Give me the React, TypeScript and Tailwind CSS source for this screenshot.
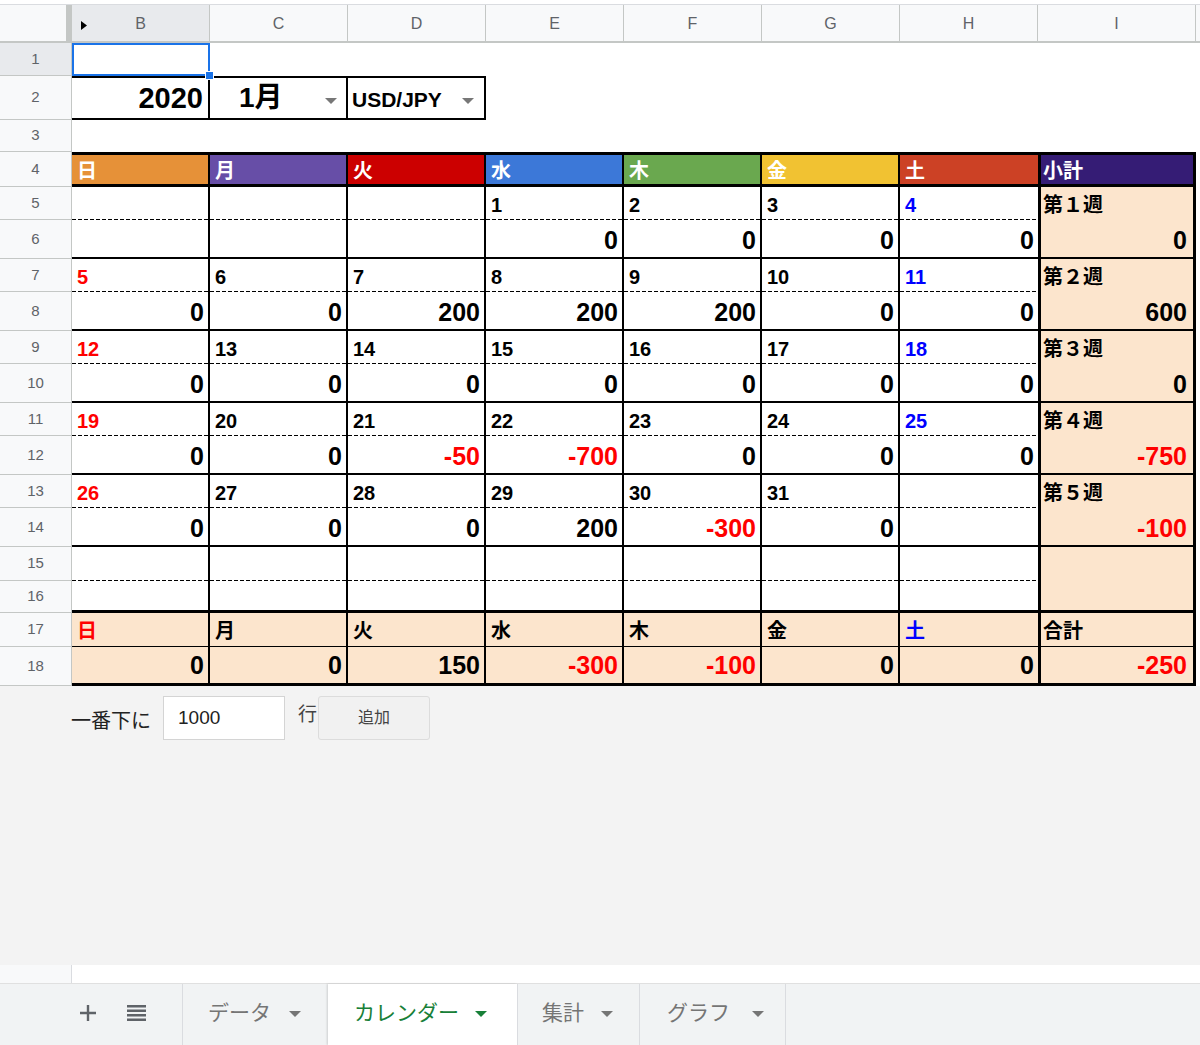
import React from 'react';

type Day = { d: number; v: number | null } | null;

interface Week {
  rows: [number, number];
  days: Day[];
  label: string;
  total: number | null;
}

const mk = (start: number, vals: number[]): Day[] =>
  vals.map((v, i) => ({ d: start + i, v }));

const weeks: Week[] = [
  {
    rows: [5, 6],
    days: [null, null, null, { d: 1, v: 0 }, { d: 2, v: 0 }, { d: 3, v: 0 }, { d: 4, v: 0 }],
    label: '第１週',
    total: 0,
  },
  { rows: [7, 8], days: mk(5, [0, 0, 200, 200, 200, 0, 0]), label: '第２週', total: 600 },
  { rows: [9, 10], days: mk(12, [0, 0, 0, 0, 0, 0, 0]), label: '第３週', total: 0 },
  { rows: [11, 12], days: mk(19, [0, 0, -50, -700, 0, 0, 0]), label: '第４週', total: -750 },
  {
    rows: [13, 14],
    days: [...mk(26, [0, 0, 0, 200, -300, 0]), null],
    label: '第５週',
    total: -100,
  },
];

const headers = [
  { t: '日', bg: 'bg-[#e69138]' },
  { t: '月', bg: 'bg-[#674ea7]' },
  { t: '火', bg: 'bg-[#cc0000]' },
  { t: '水', bg: 'bg-[#3c78d8]' },
  { t: '木', bg: 'bg-[#6aa84f]' },
  { t: '金', bg: 'bg-[#f1c232]' },
  { t: '土', bg: 'bg-[#cc4125]' },
];

const dayTotals = [0, 0, 150, -300, -100, 0, 0];

const dayColor = (i: number) =>
  i === 0 ? 'text-[#ff0000]' : i === 6 ? 'text-[#0000ff]' : 'text-black';
const valColor = (v: number | null) => (v !== null && v < 0 ? 'text-[#ff0000]' : 'text-black');

const Caret = ({ className }: { className?: string }) => (
  <svg width="12" height="6" viewBox="0 0 12 6" className={className}>
    <path d="M0 0h12L6 6z" fill="currentColor" />
  </svg>
);

// dotted divider between the date row and the value row
const Dashed = () => (
  <div className="h-[1px] shrink-0 bg-[repeating-linear-gradient(to_right,#000_0_4px,transparent_4px_6px)]" />
);

const RowHead = ({ n, cls, sel }: { n: number; cls: string; sel?: boolean }) => (
  <div
    className={`w-[72px] shrink-0 ${cls} ${
      sel ? 'bg-[#e8eaed]' : 'bg-[#f8f9fa]'
    } border-r border-b border-[#c4c7c5] flex items-center justify-center text-[15px] text-[#5f6368]`}
  >
    {n}
  </div>
);

const WeekBlock = ({ week }: { week: Week }) => (
  <div className="flex h-[72px]">
    <div className="flex flex-col w-[72px] shrink-0">
      <RowHead n={week.rows[0]} cls="h-[33px]" />
      <RowHead n={week.rows[1]} cls="flex-1" />
    </div>
    {week.days.map((d, i) => (
      <div
        key={i}
        className={`w-[138px] shrink-0 flex flex-col bg-white border-b-2 border-black ${
          i < 6 ? 'border-r-2' : ''
        }`}
      >
        <div
          className={`h-[32px] flex items-center pl-[5px] pt-[3px] text-[20px] font-bold ${dayColor(i)}`}
        >
          {d?.d}
        </div>
        <Dashed />
        <div
          className={`flex-1 flex items-center justify-end pr-[4px] pt-[2px] text-[25px] font-bold ${valColor(
            d ? d.v : null
          )}`}
        >
          {d?.v}
        </div>
      </div>
    ))}
    <div className="w-[158px] shrink-0 bg-[#fce5cd] border-l-[3px] border-r-[3px] border-b-2 border-black flex flex-col">
      <div className="h-[33px] flex items-center pl-[2px] pt-[3px] text-[20px] font-bold">{week.label}</div>
      <div
        className={`flex-1 flex items-center justify-end pr-[6px] pt-[2px] text-[25px] font-bold ${valColor(
          week.total
        )}`}
      >
        {week.total}
      </div>
    </div>
    <div className="flex-1 bg-white" />
  </div>
);

export default function App() {
  const cols = ['B', 'C', 'D', 'E', 'F', 'G', 'H'];
  return (
    <div className="w-[1200px] h-[1045px] flex flex-col overflow-hidden bg-[#f3f3f3] font-['Liberation_Sans','Noto_Sans_CJK_JP',sans-serif] text-black">
      {/* column headers */}
      <div className="h-[4px] bg-white shrink-0" />
      <div className="flex h-[39px] shrink-0 border-t border-[#dadce0] bg-[#f8f9fa]">
        <div className="w-[72px] shrink-0 border-r-[6px] border-b-[2px] border-[#c4c7c5] bg-[#f8f9fa]" />
        {cols.map((c, i) => (
          <div
            key={c}
            className={`relative w-[138px] shrink-0 border-r border-b-2 border-[#c4c7c5] flex items-center justify-center pt-[2px] text-[16px] text-[#5f6368] ${
              i === 0 ? 'bg-[#e8eaed]' : ''
            }`}
          >
            {i === 0 && (
              <svg width="6" height="9" viewBox="0 0 6 9" className="absolute left-[9px] top-[16px]">
                <path d="M0 0l6 4.5L0 9z" fill="#000" />
              </svg>
            )}
            {c}
          </div>
        ))}
        <div className="w-[158px] shrink-0 border-r border-b-2 border-[#c4c7c5] flex items-center justify-center pt-[2px] text-[16px] text-[#5f6368]">
          I
        </div>
        <div className="flex-1 border-b-2 border-[#c4c7c5]" />
      </div>

      {/* row 1 */}
      <div className="flex h-[33px] shrink-0 bg-white">
        <RowHead n={1} cls="h-full" sel />
        <div className="relative w-[138px] shrink-0 border-2 border-[#1a73e8]">
          <div className="absolute -right-[6px] -bottom-[6px] w-[9px] h-[9px] bg-[#1a73e8] border border-white" />
        </div>
        <div className="flex-1" />
      </div>

      {/* row 2 */}
      <div className="flex h-[44px] shrink-0 bg-white">
        <RowHead n={2} cls="h-full" />
        <div className="w-[138px] shrink-0 border-y-2 border-r-2 border-black flex items-center justify-end pr-[5px] pt-[1px] text-[29px] font-bold">
          2020
        </div>
        <div className="w-[138px] shrink-0 border-y-2 border-r-2 border-black flex items-center pl-[29px] text-[28px] font-bold">
          <span>1月</span>
          <Caret className="ml-auto mr-[9px] mt-[5px] text-[#777]" />
        </div>
        <div className="w-[138px] shrink-0 border-y-2 border-r-2 border-black flex items-center pl-[4px] text-[21px] font-bold">
          <span className="pt-[4px]">USD/JPY</span>
          <Caret className="ml-auto mr-[10px] mt-[5px] text-[#777]" />
        </div>
        <div className="flex-1" />
      </div>

      {/* row 3 */}
      <div className="flex h-[32px] shrink-0 bg-white">
        <RowHead n={3} cls="h-full" />
        <div className="flex-1" />
      </div>

      {/* row 4: weekday headers */}
      <div className="flex h-[35px] shrink-0 bg-white">
        <RowHead n={4} cls="h-full" />
        {headers.map((h, i) => (
          <div
            key={h.t}
            className={`w-[138px] shrink-0 ${h.bg} border-y-[3px] border-black ${
              i < 6 ? 'border-r-2' : ''
            } flex items-center pl-[5px] pt-[2px] text-[20px] font-bold text-white`}
          >
            {h.t}
          </div>
        ))}
        <div className="w-[158px] shrink-0 bg-[#351c75] border-[3px] border-black flex items-center pl-[2px] pt-[2px] text-[20px] font-bold text-white">
          小計
        </div>
        <div className="flex-1" />
      </div>

      {weeks.map((w) => (
        <WeekBlock key={w.label} week={w} />
      ))}

      {/* rows 15-16: empty week */}
      <div className="flex h-[66px] shrink-0">
        <div className="flex flex-col w-[72px] shrink-0">
          <RowHead n={15} cls="h-[34px]" />
          <RowHead n={16} cls="flex-1" />
        </div>
        {headers.map((h, i) => (
          <div
            key={h.t}
            className={`w-[138px] shrink-0 flex flex-col bg-white border-b-[3px] border-black ${
              i < 6 ? 'border-r-2' : ''
            }`}
          >
            <div className="h-[33px]" />
            <Dashed />
          </div>
        ))}
        <div className="w-[158px] shrink-0 bg-[#fce5cd] border-l-[3px] border-r-[3px] border-b-[3px] border-black" />
        <div className="flex-1 bg-white" />
      </div>

      {/* row 17 */}
      <div className="flex h-[34px] shrink-0">
        <RowHead n={17} cls="h-full" />
        {headers.map((h, i) => (
          <div
            key={h.t}
            className={`w-[138px] shrink-0 bg-[#fce5cd] border-b border-black ${
              i < 6 ? 'border-r-2' : ''
            } flex items-center pl-[5px] pt-[3px] text-[20px] font-bold ${dayColor(i)}`}
          >
            {h.t}
          </div>
        ))}
        <div className="w-[158px] shrink-0 bg-[#fce5cd] border-l-[3px] border-r-[3px] border-b border-black flex items-center pl-[2px] pt-[3px] text-[20px] font-bold">
          合計
        </div>
        <div className="flex-1 bg-white" />
      </div>

      {/* row 18 */}
      <div className="flex h-[39px] shrink-0">
        <RowHead n={18} cls="h-full" />
        {dayTotals.map((v, i) => (
          <div
            key={i}
            className={`w-[138px] shrink-0 bg-[#fce5cd] border-b-[3px] border-black ${
              i < 6 ? 'border-r-2' : ''
            } flex items-center justify-end pr-[4px] pt-[1px] text-[25px] font-bold ${valColor(v)}`}
          >
            {v}
          </div>
        ))}
        <div className="w-[158px] shrink-0 bg-[#fce5cd] border-l-[3px] border-r-[3px] border-b-[3px] border-black flex items-center justify-end pr-[6px] pt-[1px] text-[25px] font-bold text-[#ff0000]">
          -250
        </div>
        <div className="flex-1 bg-white" />
      </div>

      {/* add rows control */}
      <div className="flex-1 bg-[#f3f3f3]">
        <div className="flex items-center h-[44px] mt-[10px] pl-[71px]">
          <span className="text-[20px] text-[#222] pt-[5px]">一番下に</span>
          <div className="ml-[12px] w-[122px] h-[44px] bg-white border border-[#d4d4d4] flex items-center pl-[14px] text-[19px] text-[#222]">
            1000
          </div>
          <span className="ml-[13px] text-[19px] text-[#444] -mt-[5px]">行</span>
          <div className="ml-[1px] w-[112px] h-[44px] bg-[#f1f1f1] border border-[#dcdcdc] rounded-[3px] flex items-center justify-center text-[16px] text-[#444]">
            追加
          </div>
        </div>
      </div>

      {/* strip above tabs */}
      <div className="flex h-[18px] shrink-0 bg-white">
        <div className="w-[72px] bg-[#f8f9fa] border-r border-[#dadce0]" />
      </div>

      {/* sheet tabs */}
      <div className="flex h-[62px] shrink-0 bg-[#f1f3f4] border-t border-[#e0e0e0] text-[21px] text-[#757575]">
        <div className="w-[182px] shrink-0 flex items-center pl-[80px] pb-[4px]">
          <svg width="16" height="16" viewBox="0 0 16 16">
            <path d="M6.8 0h2.4v6.8H16v2.4H9.2V16H6.8V9.2H0V6.8h6.8z" fill="#5f6368" />
          </svg>
          <svg width="19" height="16" viewBox="0 0 19 16" className="ml-[31px]">
            <path d="M0 0h19v2.6H0zM0 4.5h19v2.6H0zM0 9h19v2.6H0zM0 13.4h19V16H0z" fill="#5f6368" />
          </svg>
        </div>
        <div className="w-[146px] shrink-0 border-l border-[#dadce0] flex items-center pl-[25px] pb-[4px]">
          <span>データ</span>
          <Caret className="ml-[18px] mt-[2px] text-[#757575]" />
        </div>
        <div className="w-[189px] shrink-0 bg-white shadow-[-1px_0_2px_rgba(0,0,0,0.15)] flex items-center pl-[26px] pb-[4px] text-[#188038]">
          <span>カレンダー</span>
          <Caret className="ml-[16px] mt-[2px] text-[#188038]" />
        </div>
        <div className="w-[122px] shrink-0 border-l border-[#dadce0] flex items-center pl-[24px] pb-[4px]">
          <span>集計</span>
          <Caret className="ml-[17px] mt-[2px] text-[#757575]" />
        </div>
        <div className="w-[147px] shrink-0 border-l border-r border-[#dadce0] flex items-center pl-[27px] pb-[4px]">
          <span>グラフ</span>
          <Caret className="ml-[22px] mt-[2px] text-[#757575]" />
        </div>
        <div className="flex-1" />
      </div>
    </div>
  );
}
